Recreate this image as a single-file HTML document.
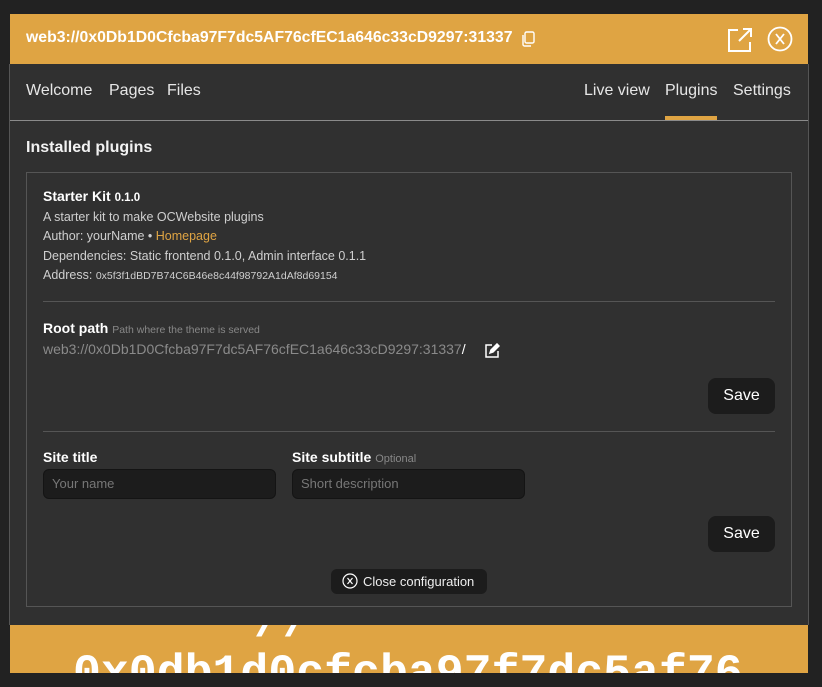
<!DOCTYPE html>
<html><head><meta charset="utf-8"><style>
*{margin:0;padding:0;box-sizing:border-box}
body{width:822px;height:687px;background:#222;font-family:"Liberation Sans",sans-serif;position:relative;overflow:hidden;color:#e8e8e8}
.a{position:absolute;white-space:nowrap}
#panel{position:absolute;left:10px;top:14px;width:798px;height:659px;background:#303030;overflow:hidden}
.hdr{position:absolute;left:0;top:0;width:798px;height:50px;background:#dfa443}
.nav{font-size:16px;color:#e6e6e6;top:68px}
.btn{position:absolute;background:#1c1c1c;border-radius:8px;color:#fff;font-size:16px;text-align:center;line-height:36px;width:67px;height:36px}
.inp{position:absolute;background:#1c1c1c;border:1px solid #141414;border-radius:6px;height:30px;width:233px;color:#777;font-size:13px;line-height:28px;padding-left:8px}
.sm{font-size:12.5px;color:#cfcfcf}
</style></head><body>
<div class="a" style="left:9px;top:64px;width:1px;height:561px;background:#555"></div>
<div class="a" style="left:808px;top:64px;width:1px;height:561px;background:#555"></div>
<div id="panel">
<div class="hdr"></div>
<div class="a" style="left:16px;top:15px;font-size:15.8px;font-weight:bold;color:#fff">web3://0x0Db1D0Cfcba97F7dc5AF76cfEC1a646c33cD9297:31337</div>
<svg class="a" style="left:510px;top:16px" width="18" height="18" viewBox="0 0 18 18" fill="none" stroke="#fff" stroke-width="1.4"><rect x="5" y="2" width="9" height="11" rx="1.5"/><path d="M3 5v9.5a1.5 1.5 0 0 0 1.5 1.5H11"/></svg>
<svg class="a" style="left:716px;top:12px" width="28" height="28" viewBox="0 0 28 28" fill="none" stroke="#fff" stroke-width="2"><path d="M12 4H3v21h21v-9"/><path d="M13 15L25 3M17 3h8v8"/></svg>
<svg class="a" style="left:757px;top:12px" width="26" height="26" viewBox="0 0 26 26" fill="none" stroke="#fff" stroke-width="1.8"><circle cx="13" cy="13" r="11.5"/><path d="M9 8l8 10M17 8l-8 10"/></svg>
<div class="a nav" style="left:16px">Welcome</div>
<div class="a nav" style="left:99px">Pages</div>
<div class="a nav" style="left:157px">Files</div>
<div class="a nav" style="left:574px">Live view</div>
<div class="a nav" style="left:655px">Plugins</div>
<div class="a nav" style="left:723px">Settings</div>
<div class="a" style="left:655px;top:102px;width:52px;height:4px;background:#dfa443"></div>
<div class="a" style="left:0;top:106px;width:798px;height:1px;background:#8a8a8a"></div>
<div class="a" style="left:16px;top:125px;font-size:16px;font-weight:bold;color:#f2f2f2">Installed plugins</div>
<div class="a" style="left:16px;top:158px;width:766px;height:435px;border:1px solid #555"></div>
<div class="a" style="left:33px;top:174px;font-size:14px;font-weight:bold;color:#fff">Starter Kit <span style="font-size:11.5px">0.1.0</span></div>
<div class="a sm" style="left:33px;top:196px">A starter kit to make OCWebsite plugins</div>
<div class="a sm" style="left:33px;top:215px">Author: yourName • <span style="color:#dfa443">Homepage</span></div>
<div class="a sm" style="left:33px;top:235px">Dependencies: Static frontend 0.1.0, Admin interface 0.1.1</div>
<div class="a sm" style="left:33px;top:254px">Address: <span style="font-size:10.5px">0x5f3f1dBD7B74C6B46e8c44f98792A1dAf8d69154</span></div>
<div class="a" style="left:33px;top:287px;width:732px;height:1px;background:#555"></div>
<div class="a" style="left:33px;top:306px;font-size:14px;font-weight:bold;color:#fff">Root path <span style="font-size:10.5px;font-weight:normal;color:#888">Path where the theme is served</span></div>
<div class="a" style="left:33px;top:327px;font-size:14px;color:#8a8a8a">web3://0x0Db1D0Cfcba97F7dc5AF76cfEC1a646c33cD9297:31337<span style="color:#fff">/</span></div>
<svg class="a" style="left:474px;top:329px" width="16" height="16" viewBox="0 0 16 16" fill="none" stroke="#fff" stroke-width="1.5"><path d="M8 2H2v12h12V8"/><path d="M6 10l1-3 6-6 2 2-6 6z" fill="#fff"/></svg>
<div class="btn" style="left:698px;top:364px">Save</div>
<div class="a" style="left:33px;top:417px;width:732px;height:1px;background:#555"></div>
<div class="a" style="left:33px;top:435px;font-size:14px;font-weight:bold;color:#fff">Site title</div>
<div class="a" style="left:282px;top:435px;font-size:14px;font-weight:bold;color:#fff">Site subtitle <span style="font-size:11px;font-weight:normal;color:#888">Optional</span></div>
<div class="inp" style="left:33px;top:455px">Your name</div>
<div class="inp" style="left:282px;top:455px">Short description</div>
<div class="btn" style="left:698px;top:502px">Save</div>
<div class="a" style="left:321px;top:555px;width:156px;height:25px;background:#1c1c1c;border-radius:6px;font-size:13px;color:#eee;line-height:25px;padding-left:32px">Close configuration</div>
<svg class="a" style="left:332px;top:559px" width="16" height="16" viewBox="0 0 16 16" fill="none" stroke="#fff" stroke-width="1.2"><circle cx="8" cy="8" r="7"/><path d="M5.5 5l5 6M10.5 5l-5 6"/></svg>
<div class="a" style="left:0;top:611px;width:798px;height:48px;background:#dfa443;overflow:hidden">
<div class="a" style="left:244px;top:-28px;font-family:'Liberation Mono',monospace;font-size:48px;color:#fff;font-weight:bold">//</div>
<div class="a" style="left:63px;top:22px;font-family:'Liberation Mono',monospace;font-size:46.5px;color:#fff;font-weight:bold">0x0db1d0cfcba97f7dc5af76</div>
</div>
</div>
</body></html>
